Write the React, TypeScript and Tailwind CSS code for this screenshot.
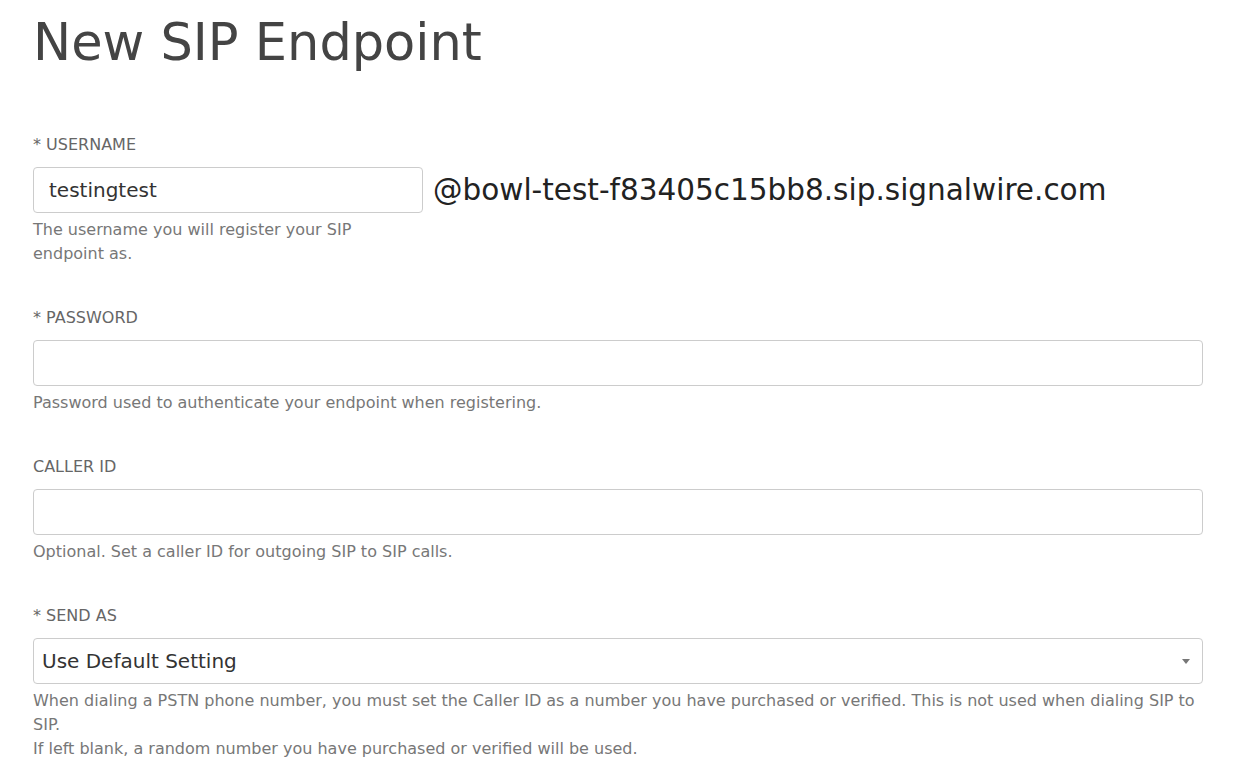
import React from 'react';

const font = { fontFamily: '"DejaVu Sans", sans-serif' };

const Help = ({ children }: { children: React.ReactNode }) => (
  <p className="mt-[5px] text-[16px] leading-6 text-[#777]">{children}</p>
);

const Label = ({ children }: { children: React.ReactNode }) => (
  <label className="block text-[16px] leading-6 uppercase text-[#666] mb-[10px]">{children}</label>
);

export default function App() {
  return (
    <div className="min-h-screen bg-white pl-[33px] pr-[53px] pt-[13px]" style={font}>
      <h1 className="text-[51px] leading-[60px] text-[#444] font-normal mb-[60px]">New SIP Endpoint</h1>

      <div className="mb-[40px]">
        <Label>* Username</Label>
        <div className="flex items-center">
          <input
            className="w-[390px] h-[46px] rounded border border-[#ccc] px-[15px] text-[20px] text-[#333] outline-none"
            defaultValue="testingtest"
          />
          <span className="ml-[10px] text-[29.5px] text-[#222]">@bowl-test-f83405c15bb8.sip.signalwire.com</span>
        </div>
        <div className="w-[390px]">
          <Help>The username you will register your SIP endpoint as.</Help>
        </div>
      </div>

      <div className="mb-[40px]">
        <Label>* Password</Label>
        <input type="password" className="w-full h-[46px] rounded border border-[#ccc] px-[15px] outline-none" />
        <Help>Password used to authenticate your endpoint when registering.</Help>
      </div>

      <div className="mb-[40px]">
        <Label>Caller ID</Label>
        <input className="w-full h-[46px] rounded border border-[#ccc] px-[15px] outline-none" />
        <Help>Optional. Set a caller ID for outgoing SIP to SIP calls.</Help>
      </div>

      <div>
        <Label>* Send As</Label>
        <div className="relative h-[46px] rounded border border-[#ccc] flex items-center pl-[8px]">
          <span className="text-[20px] text-[#333]">Use Default Setting</span>
          <span className="absolute right-[12px] top-[20px] w-0 h-0 border-l-[4px] border-r-[4px] border-t-[5px] border-l-transparent border-r-transparent border-t-[#777]" />
        </div>
        <Help>
          When dialing a PSTN phone number, you must set the Caller ID as a number you have purchased or verified. This is not used when dialing SIP to SIP.
          <br />
          If left blank, a random number you have purchased or verified will be used.
        </Help>
      </div>
    </div>
  );
}
